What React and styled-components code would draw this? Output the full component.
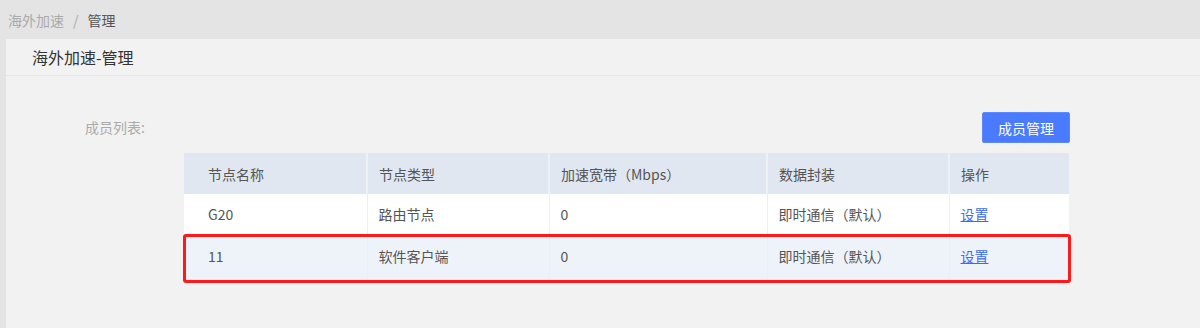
import React from "react";
import styled, { createGlobalStyle } from "styled-components";

const Global = createGlobalStyle`
  html, body { margin: 0; padding: 0; background: #e4e4e4; }
  body { font-family: "Noto Sans CJK SC", "Noto Sans", sans-serif; font-size: 14px; color: #555; }
  * { box-sizing: border-box; }
`;

const Breadcrumb = styled.div`
  height: 39px;
  display: flex;
  align-items: center;
  padding-left: 8px;
  font-size: 14px;
  gap: 9px;
`;
const Crumb = styled.span`
  color: ${p => (p.$active ? "#555" : "#aaa")};
`;
const Sep = styled.span`
  color: #aaa;
`;

const Card = styled.div`
  margin-left: 6px;
  background: #f2f2f2;
  min-height: 289px;
`;
const CardHeader = styled.div`
  height: 37px;
  display: flex;
  align-items: center;
  padding-left: 26px;
  font-size: 16px;
  color: #333;
  border-bottom: 1px solid #e6e6e6;
`;
const CardBody = styled.div`
  padding: 36px 0 0 79px;
  display: flex;
  align-items: flex-start;
`;
const Label = styled.div`
  width: 99px;
  line-height: 31px;
  color: #aaa;
  font-size: 14px;
`;
const Content = styled.div`
  width: 886px;
  display: flex;
  flex-direction: column;
`;
const Toolbar = styled.div`
  display: flex;
  justify-content: flex-end;
  margin-bottom: 10px;
`;
const Button = styled.button`
  height: 31px;
  padding: 0 15px;
  background: #4a7bff;
  color: #fff;
  border: 1px solid #5b87ff;
  border-radius: 2px;
  font-family: inherit;
  font-size: 14px;
  cursor: pointer;
`;

const TableWrap = styled.div`
  position: relative;
  width: 885px;
`;
const Table = styled.table`
  width: 885px;
  border-collapse: collapse;
  table-layout: fixed;
  font-size: 14px;
  color: #555;
`;
const Th = styled.th`
  height: 41px;
  background: #e0e7f1;
  font-weight: normal;
  text-align: left;
  padding: 0 0 0 ${p => (p.$first ? 24 : 11)}px;
  border-left: ${p => (p.$first ? "none" : "2px solid #edf0f4")};
`;
const Tr = styled.tr`
  background: ${p => (p.$alt ? "#eef3fa" : "#fff")};
  border-bottom: 1px solid #e8ebef;
`;
const Td = styled.td`
  height: ${p => (p.$alt ? 44 : 41)}px;
  padding: 0 0 ${p => (p.$alt ? 2 : 0)}px ${p => (p.$first ? 24 : 11)}px;
  border-left: ${p => (p.$first ? "none" : "1px solid #eeeeee")};
`;
const Link = styled.a`
  color: #3a6cf0;
  text-decoration: underline;
  cursor: pointer;
`;
const Highlight = styled.div`
  position: absolute;
  left: -1px;
  right: -2px;
  top: 81px;
  height: 49px;
  border: 3px solid #ff1a1a;
  border-radius: 3px;
  pointer-events: none;
`;

const cols = [183, 182, 218, 182, 120];
const headers = ["节点名称", "节点类型", "加速宽带（Mbps）", "数据封装", "操作"];
const rows = [
  ["G20", "路由节点", "0", "即时通信（默认）"],
  ["11", "软件客户端", "0", "即时通信（默认）"],
];

export default function App() {
  return (
    <>
      <Global />
      <Breadcrumb>
        <Crumb>海外加速</Crumb>
        <Sep>/</Sep>
        <Crumb $active>管理</Crumb>
      </Breadcrumb>
      <Card>
        <CardHeader>海外加速-管理</CardHeader>
        <CardBody>
          <Label>成员列表:</Label>
          <Content>
            <Toolbar>
              <Button>成员管理</Button>
            </Toolbar>
            <TableWrap>
              <Table>
                <colgroup>
                  {cols.map((w, i) => (
                    <col key={i} style={{ width: w }} />
                  ))}
                </colgroup>
                <thead>
                  <tr>
                    {headers.map((h, i) => (
                      <Th key={h} $first={i === 0}>{h}</Th>
                    ))}
                  </tr>
                </thead>
                <tbody>
                  {rows.map((r, ri) => (
                    <Tr key={ri} $alt={ri === 1}>
                      {r.map((c, ci) => (
                        <Td key={ci} $first={ci === 0} $alt={ri === 1}>{c}</Td>
                      ))}
                      <Td $alt={ri === 1}><Link>设置</Link></Td>
                    </Tr>
                  ))}
                </tbody>
              </Table>
              <Highlight />
            </TableWrap>
          </Content>
        </CardBody>
      </Card>
    </>
  );
}
